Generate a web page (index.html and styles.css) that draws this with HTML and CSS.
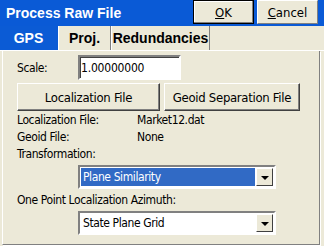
FILE: index.html
```html
<!DOCTYPE html>
<html lang="en">
<head>
    <meta charset="UTF-8">
    <title>Process Raw File</title>
    <link rel="stylesheet" href="styles.css">
</head>
<body>
    <div class="window">
        <!-- Barre de titre -->
        <div class="titlebar">
            <span class="title">Process Raw File</span>
            <button class="tb-button default"><u>O</u>K</button>
            <button class="tb-button"><u>C</u>ancel</button>
        </div>

        <!-- Onglets -->
        <div class="tabs">
            <div class="tab active">GPS</div>
            <div class="tab tab-proj">Proj.</div>
            <div class="tab tab-red">Redundancies</div>
        </div>

        <!-- Contenu -->
        <div class="panel">
            <div class="row scale-row">
                <span class="label">Scale:</span>
                <input type="text" class="field" value="1.00000000">
            </div>
            <div class="row button-row">
                <button class="raised loc-button">Localization File</button>
                <button class="raised geoid-button">Geoid Separation File</button>
            </div>
            <div class="info">
                <span class="info-key">Localization File:</span>
                <span>Market12.dat</span>
            </div>
            <div class="info">
                <span class="info-key">Geoid File:</span>
                <span>None</span>
            </div>
            <div class="info">Transformation:</div>
            <div class="combo combo-first">
                <span class="combo-text selected">Plane Similarity</span>
                <span class="combo-arrow"></span>
            </div>
            <div class="info">One Point Localization Azimuth:</div>
            <div class="combo">
                <span class="combo-text">State Plane Grid</span>
                <span class="combo-arrow"></span>
            </div>
        </div>
    </div>
</body>
</html>
```

FILE: styles.css
```css
body {
    margin: 0;
    padding: 0;
    font-family: "DejaVu Sans Condensed", "DejaVu Sans", sans-serif;
    font-stretch: condensed;
    font-size: 12px;
    letter-spacing: -0.4px;
    color: #000;
    background: #ece9d8;
}

.window {
    width: 324px;
    height: 246px;
    background: #ece9d8;
    overflow: hidden;
}

.titlebar {
    height: 26px;
    background: #0a5ad6;
    display: flex;
    align-items: flex-start;
    padding-right: 6px;
}

.title {
    flex: 1;
    color: white;
    font-family: "Liberation Sans", Arial, sans-serif;
    font-weight: bold;
    font-size: 14px;
    letter-spacing: 0;
    padding: 5px 0 0 6px;
}

.tb-button {
    width: 61px;
    height: 24px;
    margin-left: 3px;
    background: #ece9d8;
    font-family: inherit;
    font-stretch: condensed;
    font-size: 13px;
    color: #000;
    border: 1px solid;
    border-color: #fff #808080 #808080 #fff;
    padding: 0;
}

.tb-button.default {
    border: 1px solid #000;
    box-shadow: inset -1px -1px 0 #808080, inset 1px 1px 0 #fff;
}

.tabs {
    height: 24px;
    display: flex;
    border-bottom: 1px solid #fff;
}

.tab {
    font-family: "Liberation Sans", Arial, sans-serif;
    font-weight: bold;
    font-size: 14px;
    letter-spacing: 0;
    display: flex;
    align-items: center;
    justify-content: center;
    border-right: 1px solid #808080;
    border-left: 1px solid #fff;
}

.tab.active {
    width: 57px;
    background: #0b5bd5;
    color: white;
    border-left: none;
    border-right: 1px solid #0b5bd5;
}

.tab-proj {
    width: 51px;
}

.tab-red {
    width: 97px;
}

.panel {
    margin: 0 4px 0 2px;
    height: 189px;
    border-left: 1px solid #fff;
    border-right: 1px solid #808080;
    border-bottom: 1px solid #808080;
    box-shadow: 1px 1px 0 #fff;
    padding: 4px 0 0 14px;
}

.row {
    display: flex;
    align-items: center;
}

.label {
    width: 61px;
}

.field {
    width: 97px;
    height: 21px;
    box-sizing: content-box;
    padding: 0 1px;
    font-family: inherit;
    font-stretch: condensed;
    font-size: 12px;
    letter-spacing: -0.2px;
    border: 2px solid;
    border-color: #808080 #fff #fff #808080;
    box-shadow: inset 1px 1px 0 #404040;
    background: #fff;
    outline: none;
}

.button-row {
    margin-top: 3px;
    gap: 4px;
}

.raised {
    height: 28px;
    background: #ece9d8;
    font-family: inherit;
    font-stretch: condensed;
    font-size: 13px;
    letter-spacing: -0.3px;
    color: #000;
    border: 1px solid;
    border-color: #fff #404040 #404040 #fff;
    box-shadow: inset -1px -1px 0 #808080;
    padding: 0;
}

.loc-button {
    width: 143px;
}

.geoid-button {
    width: 136px;
}

.info {
    display: flex;
    height: 16px;
    line-height: 16px;
    margin-top: 1px;
}

.info:first-of-type {
    margin-top: 5px;
}

.info-key {
    width: 120px;
}

.combo {
    margin: 3px 0 3px 61px;
    width: 192px;
    height: 18px;
    display: flex;
    padding: 1px;
    border: 2px solid;
    border-color: #808080 #fff #fff #808080;
    background: #fff;
}

.combo-text {
    flex: 1;
    line-height: 18px;
    padding-left: 2px;
}

.combo-text.selected {
    background: #316ac5;
    color: #fff;
}

.combo-arrow {
    width: 15px;
    height: 16px;
    margin-left: 1px;
    background: #ece9d8;
    border: 1px solid;
    border-color: #fff #404040 #404040 #fff;
    position: relative;
}

.combo-arrow::after {
    content: "";
    position: absolute;
    left: 4px;
    top: 7px;
    border-left: 4px solid transparent;
    border-right: 4px solid transparent;
    border-top: 4px solid #000;
}
```
